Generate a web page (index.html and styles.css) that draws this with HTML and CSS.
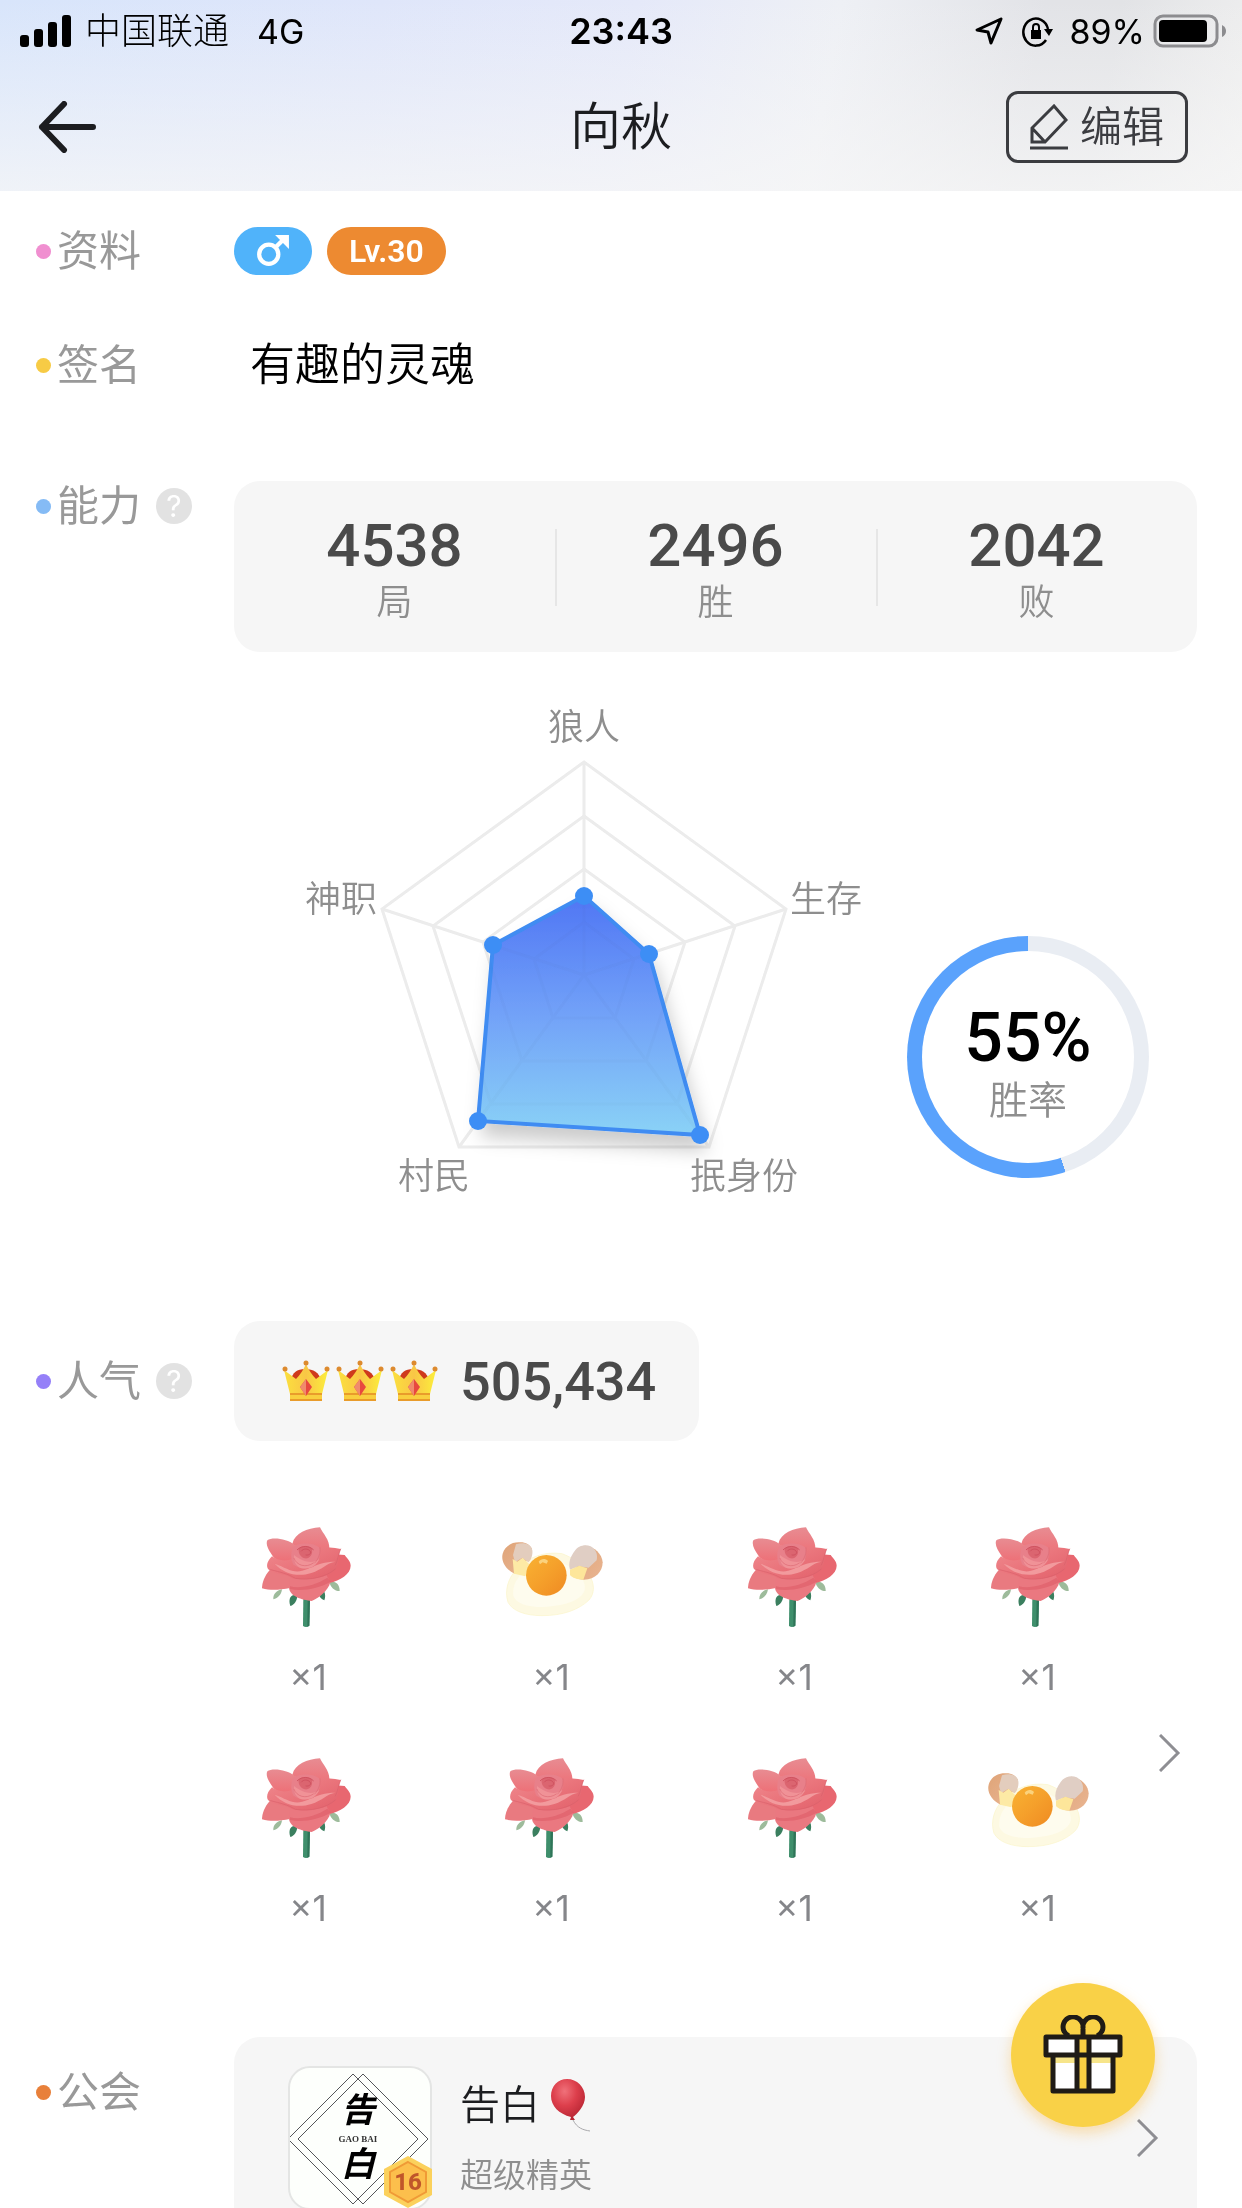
FILE: index.html
```html
<!DOCTYPE html>
<html lang="zh-CN">
<head>
  <meta charset="UTF-8" />
  <meta name="viewport" content="width=device-width, initial-scale=1.0" />
  <title>向秋</title>
  <link rel="stylesheet" href="styles.css">
</head>

<body>
  <!-- Общие иконки -->
  <svg class="sprite" aria-hidden="true">
    <defs>
      <linearGradient id="petal" x1="0" y1="0" x2="0" y2="1">
        <stop offset="0" stop-color="#e88c92" />
        <stop offset="1" stop-color="#ee6e75" />
      </linearGradient>
      <linearGradient id="petal-front" x1="0" y1="0" x2="1" y2="1">
        <stop offset="0" stop-color="#f08a8f" />
        <stop offset="0.5" stop-color="#ea757c" />
        <stop offset="1" stop-color="#e2606a" />
      </linearGradient>
      <linearGradient id="shell" x1="0" y1="0" x2="1" y2="1">
        <stop offset="0" stop-color="#dfa478" />
        <stop offset="1" stop-color="#e9b592" />
      </linearGradient>
      <linearGradient id="yolk" x1="0" y1="0" x2="1" y2="1">
        <stop offset="0" stop-color="#f9b233" />
        <stop offset="0.5" stop-color="#f5a02b" />
        <stop offset="1" stop-color="#ef8a22" />
      </linearGradient>
      <linearGradient id="gold" x1="0" y1="0" x2="1" y2="0">
        <stop offset="0" stop-color="#fbe03e" />
        <stop offset="0.5" stop-color="#f9c646" />
        <stop offset="1" stop-color="#fcee3c" />
      </linearGradient>
    </defs>

    <symbol id="rose" viewBox="36 38 336 336">
      <path fill="#3f8f6c" d="M190 268h20l-2 84q-9 7-19 1z" />
      <path fill="#2f7458" d="M203 268h7l-2 84-6 3z" />
      <path fill="#9dbb9b" d="M126 243c-16 3-27 14-26 30 14-3 24-14 26-30zM268 220c18-4 32 8 31 28-16 0-28-12-31-28z" />
      <path fill="#3b7f5f" d="M172 262c-20-8-28 10-21 31 13-4 20-16 21-31zM236 258l16-10c5 10 4 20 1 28-9-3-14-9-17-18z" />
      <path fill="url(#petal)" d="M157 106c8-32 44-46 83-49 8 18 30 38 28 64l-40 22-70-10z" />
      <path fill="url(#petal)" d="M82 96c14-12 62-4 80 12l2 54c-34 6-60-6-68-22-10-14-20-32-14-44z" />
      <path fill="#e97a80" d="M90 184c-16 18-24 38-24 56 28 8 56 4 84-1l14-32z" />
      <path fill="#e86770" d="M284 138l30 2c9 12 18 20 18 32 0 26-32 44-64 52l-38-22z" />
      <path fill="#ea7880" d="M147 238c2 26 38 36 68 40 24-10 50-32 56-56l-16-30-104 12z" />
      <path fill="#dc5a65" opacity=".55" d="M150 234c32 8 78-4 112-26l10 12c-34 20-84 30-122 22z" />
      <path fill="url(#petal-front)" d="M96 144c-14 14-18 28-12 38 16 16 48 12 74 28 50 8 104-2 130-28 8-16 6-38 14-60-22-4-44-6-62-6l-78-6-4 42c-24 8-46 4-62-8z" />
      <path fill="#f29a9d" d="M104 166c40 14 58 34 98 16 34-16 52-22 84-22-26 4-40 24-72 34-44 14-84 0-110-28z" />
      <path fill="#e8808a" d="M158 118c14-18 66-16 80 0 6 20 0 42-18 58-24 8-48 4-60-8-8-14-8-34-2-50z" />
      <path fill="#f09297" d="M162 140c-2 18 6 34 22 40 28 4 46-10 54-28-18 14-46 12-76-12z" />
      <path fill="#db6570" d="M176 122c8-12 32-12 40 0 2 12-2 24-14 28-16 2-28-12-26-28z" />
      <path fill="none" stroke="#d05260" stroke-width="3" stroke-linecap="round" d="M172 124c14-14 36-12 48 0M184 128c6-8 20-8 26 0s-4 14-12 12" />
      <path fill="none" stroke="#dd6974" stroke-width="2" stroke-linecap="round" d="M162 150c8 22 36 30 58 14M240 118c2 16-4 34-16 46" />
      <path fill="none" stroke="#d9606b" stroke-width="2" stroke-linecap="round" d="M92 184c30 8 52 12 74 26 46 8 96-6 120-28M302 122c-8 16-8 34-16 48" />
    </symbol>

    <symbol id="egg" viewBox="765 38 336 336">
      <path fill="#fdf9e2" stroke="#fbf5c8" stroke-width="2" d="M832 182c30-34 80-54 134-46 32 12 60 30 80 62 18 24 20 58 0 78-30 28-76 46-140 46-50 0-88-14-102-40-12-36 2-78 28-100z" />
      <path fill="#fefcee" d="M838 204c26-34 78-50 122-42 42 14 80 46 74 84-12 34-68 48-126 50-48 0-82-12-88-34-2-22 4-40 18-58z" />
      <path fill="url(#shell)" d="M824 196c-26-12-42-36-36-60 6-22 26-34 48-34 18-2 34 6 40 20l-6 34-44 10z" />
      <path fill="#e3cdbd" d="M828 108c24-8 46 0 49 18 2 14-4 30-12 36l-18-14-22 14-6-22z" />
      <path fill="#fdeaa5" d="M818 152l14 8 16-12 20 20-12 36-34-8z" />
      <path fill="url(#shell)" d="M1036 112c28 4 50 24 52 50 0 28-22 52-56 52-16 0-30-6-34-14l20-48z" />
      <path fill="#e0cec4" d="M1004 128c10-16 32-22 48-14 16 10 22 24 18 42l-24 22-30-4-26 10c-6-22 2-40 14-56z" />
      <path fill="#fde69a" d="M990 184l28-12 24 8-12 34c-18 0-34-6-40-14z" />
      <circle cx="919" cy="201" r="61" fill="url(#yolk)" />
      <path fill="#fbd27c" d="M896 160c8-10 20-10 28-2l-4 8-12-4-8 6z" />
    </symbol>

    <symbol id="crown" viewBox="0 0 48 42">
      <path fill="#cf3a1c" d="M9 20q2-11 14-11 13 0 16 11l-4 8H13z" />
      <path fill="url(#gold)" d="M2 10l12 9q6-6 10-15 4 9 10 15l12-9-6 24H8z" />
      <path fill="#f9cf3e" d="M8 34h32v7H8z" />
      <path fill="#e99c2b" d="M8 33h32v2H8zM8 39h32v2H8z" />
      <path fill="#e8483f" d="M24 19l6 8-6 9-6-9z" />
      <path fill="#f08a6c" d="M24 19v17l-6-9z" />
      <circle cx="24" cy="3" r="2.500" fill="#dd8a2e" />
      <circle cx="3" cy="9" r="2.500" fill="#dd8a2e" />
      <circle cx="45" cy="9" r="2.500" fill="#dd8a2e" />
    </symbol>

    <symbol id="chevron" viewBox="0 0 22 38">
      <path fill="none" stroke="#8e8e93" stroke-width="3" d="M1 1l18 18L1 37" />
    </symbol>
  </svg>

  <div class="page">
    <header class="header">
      <div class="status-bar">
        <div class="status-left">
          <svg class="icon-signal" viewBox="0 0 52 32">
            <rect x="0" y="20" width="9" height="12" rx="3" />
            <rect x="14" y="14" width="9" height="18" rx="3" />
            <rect x="28" y="7" width="9" height="25" rx="3" />
            <rect x="42" y="0" width="9" height="32" rx="3" />
          </svg>
          <span class="carrier">中国联通</span>
          <span>4G</span>
        </div>
        <time class="clock">23:43</time>
        <div class="status-right">
          <svg class="icon-location" viewBox="0 0 28 28">
            <path fill="none" stroke="#000" stroke-width="3" stroke-linejoin="round" d="M26 2L2 13l11 2 3 11z" />
          </svg>
          <svg class="icon-lock" viewBox="0 0 32 32">
            <path fill="none" stroke="#000" stroke-width="2.500" d="M27 14A12.500 13.500 0 1 0 25 25" />
            <path d="M23 14h9l-4 7zM10 15h10v9H10z" />
            <path fill="none" stroke="#000" stroke-width="2" d="M12 16v-4a3 3 0 0 1 6 0v4" />
          </svg>
          <span>89%</span>
          <svg class="icon-battery" viewBox="0 0 74 34">
            <rect x="2" y="2" width="62" height="30" rx="8" fill="none" stroke="#8c8c8f" stroke-width="3" />
            <rect x="6" y="6" width="48" height="22" rx="4" />
            <path fill="#8c8c8f" d="M69 11q4 2 4 6t-4 6z" />
          </svg>
        </div>
      </div>

      <nav class="nav-bar">
        <button class="back" aria-label="返回">
          <svg viewBox="0 0 58 52">
            <path fill="none" stroke="#1c1d20" stroke-width="6" stroke-linecap="round" stroke-linejoin="round" d="M26 3L4 26l22 23M4 26h51" />
          </svg>
        </button>
        <h1>向秋</h1>
        <button class="edit">
          <svg viewBox="0 0 38 46" aria-hidden="true">
            <path fill="none" stroke="#3b3c40" stroke-width="3" d="M24 2l12 14-21 22H2V24zM2 24l13 14M0 44h38" />
          </svg>
          编辑
        </button>
      </nav>
    </header>

    <main class="profile">
      <section class="row row-info">
        <h2 class="label pink">资料</h2>
        <div class="badges">
          <span class="badge male">
            <svg viewBox="0 0 32 32" role="img" aria-label="男">
              <circle cx="12" cy="19" r="9" fill="none" stroke="#fff" stroke-width="4" />
              <path fill="none" stroke="#fff" stroke-width="4" d="M18 13l9-9" />
              <path fill="#fff" d="M18 1h13v13z" />
            </svg>
          </span>
          <span class="badge level">Lv.30</span>
        </div>
      </section>

      <section class="row row-sign">
        <h2 class="label yellow">签名</h2>
        <p class="signature">有趣的灵魂</p>
      </section>

      <section class="row row-ability">
        <h2 class="label blue">能力 <button class="help" aria-label="能力说明">?</button></h2>
        <div class="content">
          <dl class="stats">
            <div><dd>4538</dd><dt>局</dt></div>
            <div><dd>2496</dd><dt>胜</dt></div>
            <div><dd>2042</dd><dt>败</dt></div>
          </dl>

          <div class="charts">
            <svg class="radar" viewBox="0 0 560 494">
              <defs>
                <linearGradient id="area" x1="0" y1="0" x2="0" y2="1">
                  <stop offset="0" stop-color="#5076f4" />
                  <stop offset="0.5" stop-color="#72a2f8" />
                  <stop offset="1" stop-color="#8ad2f6" />
                </linearGradient>
                <filter id="shadow" x="-20%" y="-20%" width="150%" height="150%">
                  <feDropShadow dx="5" dy="14" stdDeviation="9" flood-color="#000" flood-opacity="0.2" />
                </filter>
              </defs>
              <g id="web" class="web">
                <polygon points="280,57 482,204 405,442 155,442 78,204" />
                <polygon points="280,111 431,221 373,399 187,399 129,221" />
                <polygon points="280,164 381,237 342,356 218,356 179,237" />
                <polygon points="280,217 330,254 311,313 249,313 230,254" />
                <path d="M280 270V57M280 270L482 204M280 270L405 442M280 270L155 442M280 270L78 204" />
              </g>
              <polygon class="area" filter="url(#shadow)" points="280,191 345,249 396,430 174,416 189,240" />
              <use href="#web" opacity="0.3" />
              <g class="points">
                <circle cx="280" cy="191" r="9" />
                <circle cx="345" cy="249" r="9" />
                <circle cx="396" cy="430" r="9" />
                <circle cx="174" cy="416" r="9" />
                <circle cx="189" cy="240" r="9" />
              </g>
              <text x="280" y="35" text-anchor="middle">狼人</text>
              <text x="73" y="207" text-anchor="end">神职</text>
              <text x="486" y="207">生存</text>
              <text x="94" y="484">村民</text>
              <text x="386" y="484">抿身份</text>
            </svg>

            <div class="rate">
              <div class="rate-inner">
                <strong>55%</strong>
                <span>胜率</span>
              </div>
            </div>
          </div>
        </div>
      </section>

      <section class="row row-popularity">
        <h2 class="label purple">人气 <button class="help" aria-label="人气说明">?</button></h2>
        <div class="popularity">
          <svg class="crown"><use href="#crown" /></svg>
          <svg class="crown"><use href="#crown" /></svg>
          <svg class="crown"><use href="#crown" /></svg>
          <strong>505,434</strong>
        </div>
      </section>

      <section class="gifts">
        <ul>
          <li><svg><use href="#rose" /></svg><span>×1</span></li>
          <li><svg><use href="#egg" /></svg><span>×1</span></li>
          <li><svg><use href="#rose" /></svg><span>×1</span></li>
          <li><svg><use href="#rose" /></svg><span>×1</span></li>
          <li><svg><use href="#rose" /></svg><span>×1</span></li>
          <li><svg><use href="#rose" /></svg><span>×1</span></li>
          <li><svg><use href="#rose" /></svg><span>×1</span></li>
          <li><svg><use href="#egg" /></svg><span>×1</span></li>
        </ul>
        <a href="#" class="more" aria-label="全部礼物"><svg class="chevron"><use href="#chevron" /></svg></a>
      </section>

      <section class="row row-guild">
        <h2 class="label orange">公会</h2>
        <a href="#" class="guild">
          <span class="guild-logo">
            <svg viewBox="0 0 140 140">
              <g fill="none" stroke="#55565a" stroke-width="1">
                <path d="M63 6l65 65-65 65L-2 71z" />
                <path d="M73 6l65 65-65 65L8 71z" />
              </g>
              <text x="68" y="54" class="ink">告</text>
              <text x="68" y="74" class="pinyin">GAO BAI</text>
              <text x="68" y="108" class="ink">白</text>
            </svg>
            <svg class="guild-level" viewBox="0 0 48 52">
              <path fill="#fbd15c" d="M24 0l24 13v26L24 52 0 39V13z" />
              <path fill="#fcbf4c" stroke="#f09a36" stroke-width="2" d="M24 6l18 10v20L24 46 6 36V16z" />
              <text x="24" y="34">16</text>
            </svg>
          </span>
          <span class="guild-info">
            <span class="guild-name">告白
              <svg viewBox="0 0 44 54" aria-hidden="true">
                <defs>
                  <radialGradient id="balloon" cx="0.4" cy="0.3" r="0.7">
                    <stop offset="0" stop-color="#f0717a" />
                    <stop offset="0.5" stop-color="#dd3f4c" />
                    <stop offset="1" stop-color="#b92634" />
                  </radialGradient>
                </defs>
                <path fill="url(#balloon)" d="M18 1c10 0 18 8 18 18 0 9-8 17-12 20l2 3h-5l1-3C10 36 2 28 2 18 2 8 9 1 18 1z" />
                <path fill="none" stroke="#a9a9ac" stroke-width="1" d="M24 42c4 8 10 10 17 11" />
              </svg>
            </span>
            <span class="guild-rank">超级精英</span>
          </span>
          <svg class="chevron"><use href="#chevron" /></svg>
        </a>
      </section>
    </main>

    <button class="gift-button" aria-label="送礼物">
      <svg viewBox="0 0 80 80">
        <path fill="#fff" d="M3 22h74v18H3zM11 40h58v36H11z" />
        <path fill="#f7e58a" d="M11 40h58v8H11z" />
        <path fill="#f9cf43" d="M34 22h12v54H34z" />
        <g fill="none" stroke="#1f1b16" stroke-width="5" stroke-linejoin="round">
          <path d="M3 22h74v18H3zM10 40v36h60V40M34 22v54M46 22v54M40 14v8" />
          <path d="M26 21a10 10 0 1 1 14-8a10 10 0 1 1 14 8" />
        </g>
      </svg>
    </button>
  </div>
</body>
</html>
```
FILE: styles.css
```css
* {
  box-sizing: border-box;
}

body {
  margin: 0;
  background-color: #fff;
  color: #1c1d20;
  font-family: Inter, 'Noto Sans CJK SC', sans-serif;
}

h1,
h2,
p,
ul,
dl,
dd {
  margin: 0;
  padding: 0;
  font-weight: 400;
}

button {
  padding: 0;
  border: none;
  background: none;
  color: inherit;
  font-family: inherit;
  cursor: pointer;
}

a {
  color: inherit;
  text-decoration: none;
}

svg {
  display: block;
  flex: none;
}

.sprite {
  position: absolute;
  width: 0;
  height: 0;
}

.page {
  position: relative;
  height: 100vh;
  overflow: hidden;
}

/* Шапка */
.header {
  background:
    linear-gradient(to bottom, rgba(247, 247, 247, 0) 0%, rgba(247, 247, 247, 0.75) 100%),
    linear-gradient(100deg, #d8e5fb 0%, #dfe6fa 30%, #e5e9f9 50%, #eef0f5 66%, #e2e3e7 82%, #e2e3e6 88%, #efefef 100%);
}

.status-bar {
  display: grid;
  grid-template-columns: 1fr auto 1fr;
  align-items: center;
  height: 62px;
  padding: 0 15px;
  color: #000;
  font-size: 34px;
}

.status-left,
.status-right {
  display: flex;
  align-items: center;
}

.status-left {
  padding-left: 5px;
}

.status-right {
  justify-content: flex-end;
}

.icon-signal {
  width: 52px;
  height: 32px;
  margin-right: 13px;
}

.carrier {
  margin-right: 28px;
  font-size: 36px;
  font-weight: 300;
  line-height: 56px;
}

.clock {
  font-size: 36px;
  font-weight: 600;
}

.icon-location {
  width: 28px;
  height: 28px;
  margin-right: 18px;
}

.icon-lock {
  width: 32px;
  height: 32px;
  margin-right: 16px;
}

.icon-battery {
  width: 74px;
  height: 34px;
  margin-left: 8px;
}

.nav-bar {
  display: grid;
  grid-template-columns: 1fr auto 1fr;
  align-items: center;
  height: 129px;
  padding: 0 54px;
}

.back {
  justify-self: start;
  margin-left: -16px;
}

.back svg {
  width: 58px;
  height: 52px;
}

.nav-bar h1 {
  font-size: 51px;
  font-weight: 350;
  line-height: 72px;
}

.edit {
  display: flex;
  align-items: center;
  justify-self: end;
  gap: 12px;
  height: 72px;
  padding: 0 21px;
  border: 3px solid #3b3c40;
  border-radius: 12px;
  color: #3b3c40;
  font-size: 42px;
  font-weight: 350;
  line-height: 60px;
}

.edit svg {
  width: 38px;
  height: 46px;
}

/* Строки профиля */
.profile {
  padding: 35px 45px 0 36px;
}

.row {
  display: grid;
  grid-template-columns: 198px 1fr;
  align-items: start;
}

.label {
  display: flex;
  align-items: center;
  color: #999;
  font-size: 42px;
  line-height: 50px;
}

.label::before {
  content: '';
  width: 15px;
  height: 15px;
  margin-right: 6px;
  border-radius: 50%;
}

.pink::before { background-color: #f08fd0; }
.yellow::before { background-color: #f7cb45; }
.blue::before { background-color: #85bbf5; }
.purple::before { background-color: #9580f8; }
.orange::before { background-color: #e8803a; }

.help {
  width: 36px;
  height: 36px;
  margin-left: 15px;
  border-radius: 50%;
  background-color: #e2e2e2;
  color: #fff;
  font-size: 30px;
  line-height: 36px;
}

.row-info,
.row-sign,
.row-popularity {
  align-items: center;
}

.badges {
  display: flex;
  gap: 15px;
}

.badge {
  display: flex;
  align-items: center;
  justify-content: center;
  height: 48px;
  padding: 0 22px;
  border-radius: 24px;
  color: #fff;
  font-family: Roboto, sans-serif;
  font-size: 32px;
  font-weight: 600;
}

.badge svg {
  width: 34px;
  height: 34px;
}

.male {
  background-color: #50b3fa;
}

.level {
  background-color: #ed8a31;
}

.row-sign {
  margin-top: 59px;
}

.signature {
  padding-left: 16px;
  color: #000;
  font-size: 45px;
  font-weight: 350;
  line-height: 60px;
}

/* Способности */
.row-ability {
  margin-top: 86px;
}

.stats {
  display: grid;
  grid-template-columns: 1fr 1fr 1fr;
  padding: 30px 0 28px;
  border-radius: 26px;
  background-color: #f6f6f6;
  text-align: center;
}

.stats div {
  display: flex;
  flex-direction: column;
  position: relative;
}

.stats div + div::before {
  content: '';
  position: absolute;
  top: 18px;
  left: 0;
  width: 2px;
  height: 77px;
  background-color: #e6e6e6;
}

.stats dd {
  color: #4a4a4a;
  font-family: Roboto, sans-serif;
  font-size: 60px;
  font-weight: 500;
  line-height: 70px;
}

.stats dt {
  color: #8e8e8e;
  font-size: 36px;
  font-weight: 350;
  line-height: 43px;
}

.charts {
  display: flex;
  align-items: flex-end;
  gap: 43px;
  padding: 53px 0 0 70px;
}

.radar {
  width: 560px;
  height: 494px;
}

.radar text {
  fill: #8e8e8e;
  font-size: 36px;
  font-weight: 350;
}

.web {
  fill: none;
  stroke: #f0f0f0;
  stroke-width: 3;
}

.web + .area + use {
  mix-blend-mode: multiply;
}

.area {
  fill: url(#area);
  stroke: #3f8cf2;
  stroke-width: 4;
}

.points {
  fill: #3d8ef5;
}

.rate {
  display: flex;
  width: 242px;
  height: 242px;
  margin-bottom: 21px;
  padding: 15px;
  border-radius: 50%;
  background: conic-gradient(#e9edf3 0 45%, #5aa2fc 45% 100%);
}

.rate-inner {
  display: flex;
  flex: 1;
  flex-direction: column;
  align-items: center;
  justify-content: center;
  padding-top: 14px;
  border-radius: 50%;
  background-color: #fff;
}

.rate strong {
  color: #000;
  font-family: Roboto, sans-serif;
  font-size: 68px;
  font-weight: 500;
  line-height: 72px;
}

.rate span {
  color: #8e8e8e;
  font-size: 39px;
  font-weight: 350;
  line-height: 52px;
}

/* Популярность и подарки */
.row-popularity {
  margin-top: 122px;
}

.popularity {
  display: flex;
  align-items: center;
  justify-self: start;
  gap: 6px;
  height: 120px;
  padding: 0 43px 0 48px;
  border-radius: 26px;
  background-color: #f6f6f6;
}

.crown {
  width: 48px;
  height: 42px;
}

.popularity strong {
  margin-left: 16px;
  color: #4a4a4a;
  font-family: Roboto, sans-serif;
  font-size: 54px;
  font-weight: 500;
}

.gifts {
  display: flex;
  align-items: center;
  justify-content: space-between;
  padding: 80px 16px 0 198px;
}

.gifts ul {
  display: grid;
  grid-template-columns: repeat(4, 148px);
  gap: 51px 95px;
  list-style: none;
}

.gifts li {
  display: flex;
  flex-direction: column;
  align-items: center;
  gap: 20px;
  color: #85868a;
  font-size: 35px;
  line-height: 48px;
}

.gifts li svg {
  width: 112px;
  height: 112px;
}

.more {
  padding-top: 52px;
}

.chevron {
  width: 22px;
  height: 38px;
}

/* Гильдия */
.row-guild {
  margin-top: 105px;
}

.row-guild .label {
  padding-top: 30px;
}

.guild {
  display: flex;
  align-items: center;
  padding: 29px 38px 29px 54px;
  border-radius: 26px;
  background-color: #f6f6f6;
}

.guild-logo {
  position: relative;
  width: 144px;
  height: 144px;
  border: 2px solid #e4e5e4;
  border-radius: 22px;
  background-color: #fdfffc;
}

.ink {
  fill: #000;
  font-size: 34px;
  font-style: italic;
  font-weight: 700;
  text-anchor: middle;
}

.pinyin {
  fill: #333;
  font-family: 'Liberation Serif', serif;
  font-size: 9px;
  font-weight: 700;
  text-anchor: middle;
}

.guild-level {
  position: absolute;
  right: -2px;
  bottom: 0;
  width: 48px;
  height: 52px;
}

.guild-level text {
  fill: #c0562a;
  font-family: Roboto, sans-serif;
  font-size: 24px;
  font-weight: 800;
  text-anchor: middle;
}

.guild-info {
  display: flex;
  flex: 1;
  flex-direction: column;
  gap: 16px;
  margin-left: 28px;
}

.guild-name {
  display: flex;
  align-items: center;
  gap: 9px;
  font-size: 40px;
  font-weight: 350;
  line-height: 58px;
}

.guild-name svg {
  width: 44px;
  height: 54px;
}

.guild-rank {
  color: #8e8e8e;
  font-size: 33px;
  font-weight: 350;
  line-height: 50px;
}

.gift-button {
  display: flex;
  align-items: center;
  justify-content: center;
  position: absolute;
  right: 87px;
  bottom: 81px;
  width: 144px;
  height: 144px;
  border-radius: 50%;
  background-color: #f9d147;
  box-shadow: 0 6px 14px rgba(250, 180, 60, 0.4);
}

.gift-button svg {
  width: 80px;
  height: 80px;
}
```
